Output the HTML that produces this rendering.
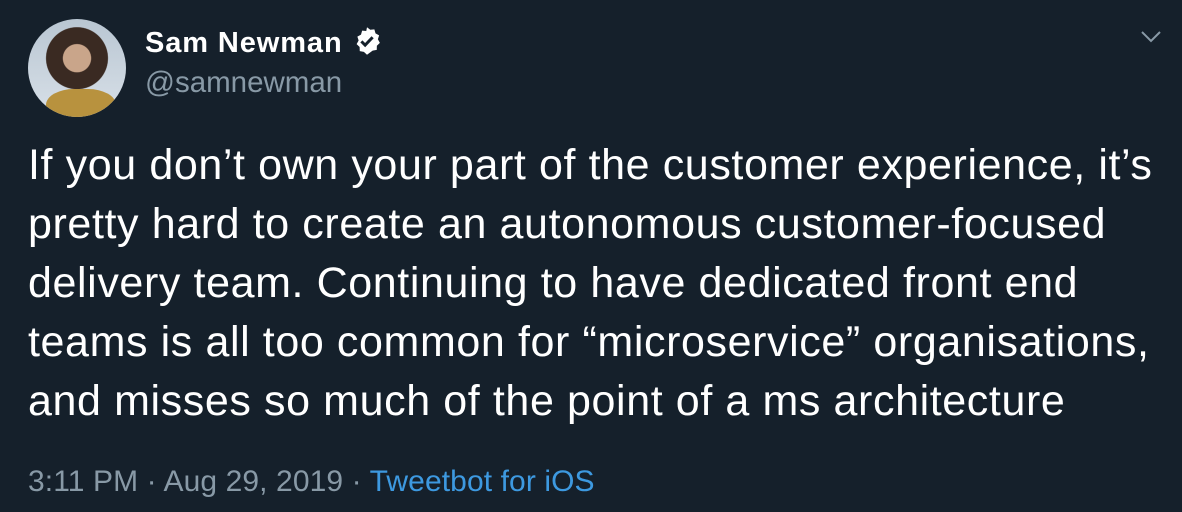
<!DOCTYPE html>
<html><head><meta charset="utf-8"><style>
body{margin:0;width:1182px;height:512px;background:#15202b;font-family:"Liberation Sans",Arial,sans-serif;position:relative;overflow:hidden}
.av{position:absolute;left:28px;top:19px;width:98px;height:98px;border-radius:50%;overflow:hidden;background:radial-gradient(circle at 50% 40%,#c9a58a 0 18%,#3a2a22 19% 40%,transparent 41%),linear-gradient(#b9c6d2,#d8e0e8)}
.av:after{content:"";position:absolute;left:18px;top:70px;width:70px;height:40px;background:#b8923e;border-radius:40% 40% 0 0}
.name{position:absolute;left:145px;top:26px;color:#fff;font-weight:bold;font-size:29px;line-height:1;letter-spacing:0.9px;white-space:nowrap}
.handle{position:absolute;left:145px;top:68px;color:#8899a6;font-size:29.5px;line-height:1}
.txt{position:absolute;left:28px;top:136px;width:1160px;color:#fff;font-size:43px;line-height:59px;letter-spacing:0.6px;white-space:nowrap}
.foot{position:absolute;left:28px;top:467px;color:#8899a6;font-size:30px;line-height:1;letter-spacing:0.1px;white-space:nowrap}
.foot a{color:#3d99e0;text-decoration:none}
</style></head><body>
<div class="av"></div>
<div class="name">Sam Newman <svg width="30" height="30" viewBox="0 0 24 24" style="vertical-align:-4px"><path fill="#fff" d="M12 1l2.6 2 3.3-.3.9 3.2 2.9 1.6-1 3.1 1.6 2.9-2.4 2.3-.1 3.3-3.3.6L12 23l-2.5-2.3-3.3-.6-.1-3.3L3.7 14.5l1.6-2.9-1-3.1 2.9-1.6.9-3.2 3.3.3z"/><path d="M7.5 12.3l3 3 6-6.3" stroke="#15202b" stroke-width="2.4" fill="none"/></svg></div>
<div class="handle">@samnewman</div>
<svg style="position:absolute;left:1140px;top:30px" width="22" height="14" viewBox="0 0 22 14"><path d="M2 2l9 9 9-9" stroke="#8899a6" stroke-width="2" fill="none"/></svg>
<div class="txt">If you don’t own your part of the customer experience, it’s<br>pretty hard to create an autonomous customer-focused<br>delivery team. Continuing to have dedicated front end<br>teams is all too common for “microservice” organisations,<br>and misses so much of the point of a ms architecture</div>
<div class="foot">3:11 PM · Aug 29, 2019 · <a>Tweetbot for iOS</a></div>
</body></html>
